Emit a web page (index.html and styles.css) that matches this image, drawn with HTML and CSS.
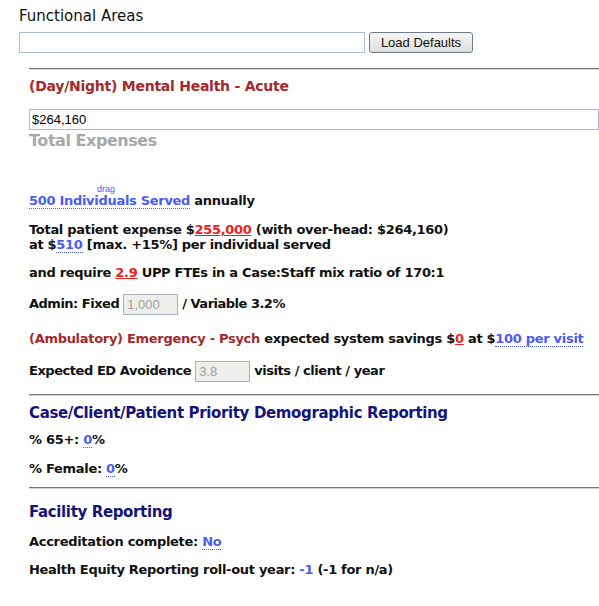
FILE: index.html
```html
<!DOCTYPE html>
<html>
<head>
<meta charset="utf-8">
<link rel="stylesheet" href="styles.css">
</head>
<body>
<div class="title">Functional Areas</div>
<div class="toprow">
  <input class="fa-input" type="text" value="">
  <button class="btn">Load Defaults</button>
</div>
<div class="section">
  <hr class="rule r1">
  <div class="head-acute">(Day/Night) Mental Health - Acute</div>
  <input class="total-input" type="text" value="$264,160">
  <div class="total-label">Total Expenses</div>
  <div class="line l-served"><span class="drag-wrap"><span class="link">500 Individuals Served</span><span class="drag">drag</span></span> annually</div>
  <div class="line l-expense">Total patient expense $<span class="red">255,000</span> (with over-head: $264,160)<br>at $<span class="link">510</span> [max. +15%] per individual served</div>
  <div class="line l-std">and require <span class="red">2.9</span> UPP FTEs in a Case:Staff mix ratio of 170:1</div>
  <div class="line l-input l-admin">Admin: Fixed <input class="small-input" type="text" value="1,000" disabled> / Variable 3.2%</div>
  <div class="line l-amb"><span class="brown">(Ambulatory) Emergency - Psych</span> expected system savings $<span class="red">0</span> at $<span class="link">100 per visit</span></div>
  <div class="line l-input l-ed">Expected ED Avoidence <input class="small-input" type="text" value="3.8" disabled> visits / client / year</div>
  <hr class="rule r2">
  <div class="head-navy h-case">Case/Client/Patient Priority Demographic Reporting</div>
  <div class="line l-65">% 65+: <span class="link">0</span>%</div>
  <div class="line l-std2">% Female: <span class="link">0</span>%</div>
  <hr class="rule r3">
  <div class="head-navy h-fac">Facility Reporting</div>
  <div class="line l-std3">Accreditation complete: <span class="link">No</span></div>
  <div class="line l-std3">Health Equity Reporting roll-out year: <span class="link">-1</span> (-1 for n/a)</div>
</div>
</body>
</html>
```

FILE: styles.css
```css
html, body {
  margin: 0;
  padding: 0;
  background: #ffffff;
  overflow: hidden;
}
body {
  padding: 6px 0 0 19px;
  font-family: "DejaVu Sans", Verdana, sans-serif;
  color: #111111;
}
.title {
  font-family: "Comic Sans MS", "DejaVu Sans", sans-serif;
  font-size: 15px;
  line-height: 20px;
  height: 20px;
}
.toprow {
  margin-top: 6px;
  display: flex;
  gap: 4px;
  height: 21px;
}
.fa-input {
  box-sizing: border-box;
  width: 346px;
  height: 21px;
  margin: 0;
  border: 1px solid #a7bbd3;
  padding: 1px 3px;
  font-family: "Liberation Sans", Arial, sans-serif;
  font-size: 13px;
}
.btn {
  box-sizing: border-box;
  width: 104px;
  height: 21px;
  margin: 0;
  padding: 0;
  border: 1px solid #707b8a;
  border-radius: 3px;
  background: linear-gradient(#f6f6f6, #dedede);
  font-family: "Liberation Sans", Arial, sans-serif;
  font-size: 13px;
  color: #111;
}
.section {
  margin-left: 10px;
  font-size: 13px;
  font-weight: bold;
  letter-spacing: -0.3px;
}
.rule {
  margin: 0;
  border: 0;
  border-top: 1px solid #787878;
  border-bottom: 1px solid #d4d4d4;
  height: 0;
}
.r1 { margin-top: 15px; }
.r2 { margin-top: 12px; }
.r3 { margin-top: 11px; }
.head-acute {
  margin-top: 7px;
  font-size: 14px;
  line-height: 18px;
  letter-spacing: -0.25px;
  color: #a32a2a;
}
.brown { color: #a32a2a; }
.total-input {
  display: block;
  box-sizing: border-box;
  margin: 14px 0 0 0;
  width: 100%;
  height: 21px;
  border: 1px solid #a7bbd3;
  padding: 1px 2px;
  font-family: "Liberation Sans", Arial, sans-serif;
  font-size: 13px;
  font-weight: normal;
  letter-spacing: 0;
  color: #000;
}
.total-label {
  margin-top: 2px;
  font-size: 16px;
  line-height: 18px;
  letter-spacing: -0.45px;
  color: #a8a8a8;
}
.line {
  line-height: 15px;
  margin-top: 13px;
  white-space: nowrap;
}
.l-served { margin-top: 43px; }
.l-expense { margin-top: 14px; }
.l-input { line-height: 21px; }
.l-admin { margin-top: 13px; letter-spacing: -0.5px; }
.l-amb { margin-top: 16px; }
.l-ed { margin-top: 14px; letter-spacing: -0.45px; }
.l-65 { margin-top: 10px; }
.l-std2 { margin-top: 14px; }
.l-std3 { margin-top: 13px; }
.head-navy {
  font-size: 15px;
  line-height: 18px;
  letter-spacing: -0.36px;
  color: #14147a;
}
.h-case { margin-top: 8px; }
.h-fac { margin-top: 14px; }
.link {
  color: #4b5cf2;
  border-bottom: 1px dotted #4b5cf2;
}
.red {
  color: #f02020;
  text-decoration: underline;
  text-decoration-color: #f02020;
}
.drag-wrap {
  position: relative;
}
.drag {
  position: absolute;
  left: 68px;
  top: -8px;
  font-size: 9px;
  line-height: 9px;
  font-weight: normal;
  letter-spacing: 0;
  color: #4b5cf2;
  font-family: "Liberation Sans", Arial, sans-serif;
}
.small-input {
  box-sizing: border-box;
  width: 55px;
  height: 21px;
  margin: 0;
  vertical-align: middle;
  border: 1px solid #a9b4c0;
  background: #eeeeea;
  padding: 1px 3px;
  font-family: "Liberation Sans", Arial, sans-serif;
  font-size: 13px;
  font-weight: normal;
  letter-spacing: 0;
  color: #a0a0a0;
}
```
